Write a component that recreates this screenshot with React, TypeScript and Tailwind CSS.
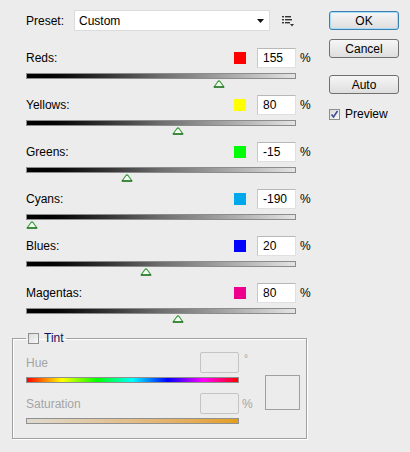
import React from 'react';

interface Channel {
    name: string;
    color: string;
    value: number;
}

const channels: Channel[] = [
    { name: 'Reds', color: '#ff0000', value: 155 },
    { name: 'Yellows', color: '#ffff00', value: 80 },
    { name: 'Greens', color: '#00ff00', value: -15 },
    { name: 'Cyans', color: '#00a8ec', value: -190 },
    { name: 'Blues', color: '#0000ff', value: 20 },
    { name: 'Magentas', color: '#ec008c', value: 80 },
];

const Thumb = ({ left }: { left: number }) => (
    <svg className="absolute top-[6px]" style={{ left: left - 6 }} width="12" height="8" viewBox="0 0 12 8">
        <path d="M1 7 L5 1.5 Q6 0.5 7 1.5 L11 7 Z" fill="#f4fff4" stroke="#3f9a3f" strokeWidth="1.2" strokeLinejoin="round" />
        <path d="M1 7 L11 7" stroke="#1f6f1f" strokeWidth="1.4" />
    </svg>
);

const Slider = ({ value }: { value: number }) => {
    const left = ((value + 200) / 500) * 270;
    return (
        <div className="relative mt-[5px] w-[270px] h-[6px] border border-[#8c8c8c] bg-gradient-to-r from-black via-[#6e6e6e] to-[#e4e4e4]">
            <Thumb left={left} />
        </div>
    );
};

const Button = ({ label, primary }: { label: string; primary?: boolean }) => (
    <button
        className={`w-[70px] h-[19px] rounded-[3px] border text-[12px] leading-none flex items-center justify-center bg-gradient-to-b from-[#f6f6f6] to-[#dedede] ${primary ? 'border-[#3c7fb1] shadow-[inset_0_0_0_1px_#a6dcf5]' : 'border-[#707070]'}`}
    >
        {label}
    </button>
);

const MenuIcon = () => (
    <svg width="13" height="12" viewBox="0 0 13 12">
        <rect x="0" y="1" width="2" height="1.4" fill="#333" />
        <rect x="3" y="1" width="6" height="1.4" fill="#333" />
        <rect x="0" y="4" width="2" height="1.4" fill="#333" />
        <rect x="3" y="4" width="7" height="1.4" fill="#333" />
        <rect x="0" y="7" width="2" height="1.4" fill="#333" />
        <rect x="3" y="7" width="5" height="1.4" fill="#333" />
        <path d="M8 9 L12 9 L10 11.5 Z" fill="#333" />
    </svg>
);

const App = () => {
    return (
        <div className="w-[410px] h-[452px] bg-[#ececec] flex text-[12px] text-black" style={{ fontFamily: '"Liberation Sans", Arial, sans-serif' }}>
            <div className="w-[310px] pl-[12px] pt-[10px]">
                <div className="pl-[14px] flex items-center h-[21px]">
                    <span className="w-[48px]">Preset:</span>
                    <div className="w-[196px] h-[21px] bg-white border border-[#dcdcdc] flex items-center justify-between pl-[4px] pr-[5px]">
                        <span>Custom</span>
                        <svg width="7" height="4" viewBox="0 0 7 4"><path d="M0 0 L7 0 L3.5 4 Z" fill="#111" /></svg>
                    </div>
                    <div className="ml-[12px]">
                        <MenuIcon />
                    </div>
                </div>

                <div className="pl-[14px] mt-[17px]">
                    {channels.map((c) => (
                        <div key={c.name} className="h-[47px]">
                            <div className="flex items-center h-[20px] w-[290px]">
                                <span className="flex-1">{c.name}:</span>
                                <div className="w-[12px] h-[12px] mr-[11px]" style={{ backgroundColor: c.color }} />
                                <div className="w-[39px] h-[20px] bg-white border border-[#e0e0e0] border-t-[#b8b8b8] border-l-[#c8c8c8] flex items-center pl-[5px]">
                                    {c.value}
                                </div>
                                <span className="ml-[4px] w-[16px]">%</span>
                            </div>
                            <Slider value={c.value} />
                        </div>
                    ))}
                </div>

                <fieldset className="-mt-[1px] w-[295px] h-[110px] border border-[#a0a0a0] shadow-[inset_1px_1px_0_#ffffff,1px_1px_0_#ffffff] pl-[13px]">
                    <legend className="px-[2px] flex items-center">
                        <span className="w-[11px] h-[11px] border border-[#8e8e8e] bg-gradient-to-br from-[#dcdcdc] to-[#f8f8f8]" />
                        <span className="ml-[5px] text-[#101060]">Tint</span>
                    </legend>
                    <div className="flex mt-[5px] text-[#a4a4a4]">
                        <div className="w-[239px]">
                            <div className="flex items-center">
                                <div className="w-[213px] flex items-center justify-between">
                                    <span>Hue</span>
                                    <div className="w-[39px] h-[21px] border border-[#c4c4c4] rounded-[2px] bg-[#ececec]" />
                                </div>
                                <span className="ml-[5px] -mt-[8px] text-[10px]">°</span>
                            </div>
                            <div className="mt-[4px] w-[213px] h-[6px] border border-[#909090] bg-[linear-gradient(to_right,#ff0000,#ffff00,#00ff00,#00ffff,#0000ff,#ff00ff,#ff0000)]" />
                            <div className="flex items-center mt-[10px]">
                                <div className="w-[213px] flex items-center justify-between">
                                    <span>Saturation</span>
                                    <div className="w-[39px] h-[21px] border border-[#c4c4c4] rounded-[2px] bg-[#ececec]" />
                                </div>
                                <span className="ml-[3px]">%</span>
                            </div>
                            <div className="mt-[4px] w-[213px] h-[6px] border border-[#909090] bg-gradient-to-r from-[#dedad0] to-[#e49e1a]" />
                        </div>
                        <div className="mt-[23px] w-[35px] h-[35px] border border-[#a0a0a0]" />
                    </div>
                </fieldset>
            </div>

            <div className="ml-[19px] pt-[11px] flex flex-col">
                <Button label="OK" primary />
                <div className="mt-[9px]"><Button label="Cancel" /></div>
                <div className="mt-[17px]"><Button label="Auto" /></div>
                <div className="mt-[11px] flex items-center">
                    <span className="w-[11px] h-[11px] border border-[#8e8e8e] bg-gradient-to-br from-[#dcdcdc] to-[#f8f8f8] flex items-center justify-center">
                        <svg width="9" height="9" viewBox="0 0 9 9"><path d="M1.5 4.5 L3.5 7 L7.5 1" fill="none" stroke="#3b4e92" strokeWidth="1.6" /></svg>
                    </span>
                    <span className="ml-[5px]">Preview</span>
                </div>
            </div>
        </div>
    );
};

export default App;
